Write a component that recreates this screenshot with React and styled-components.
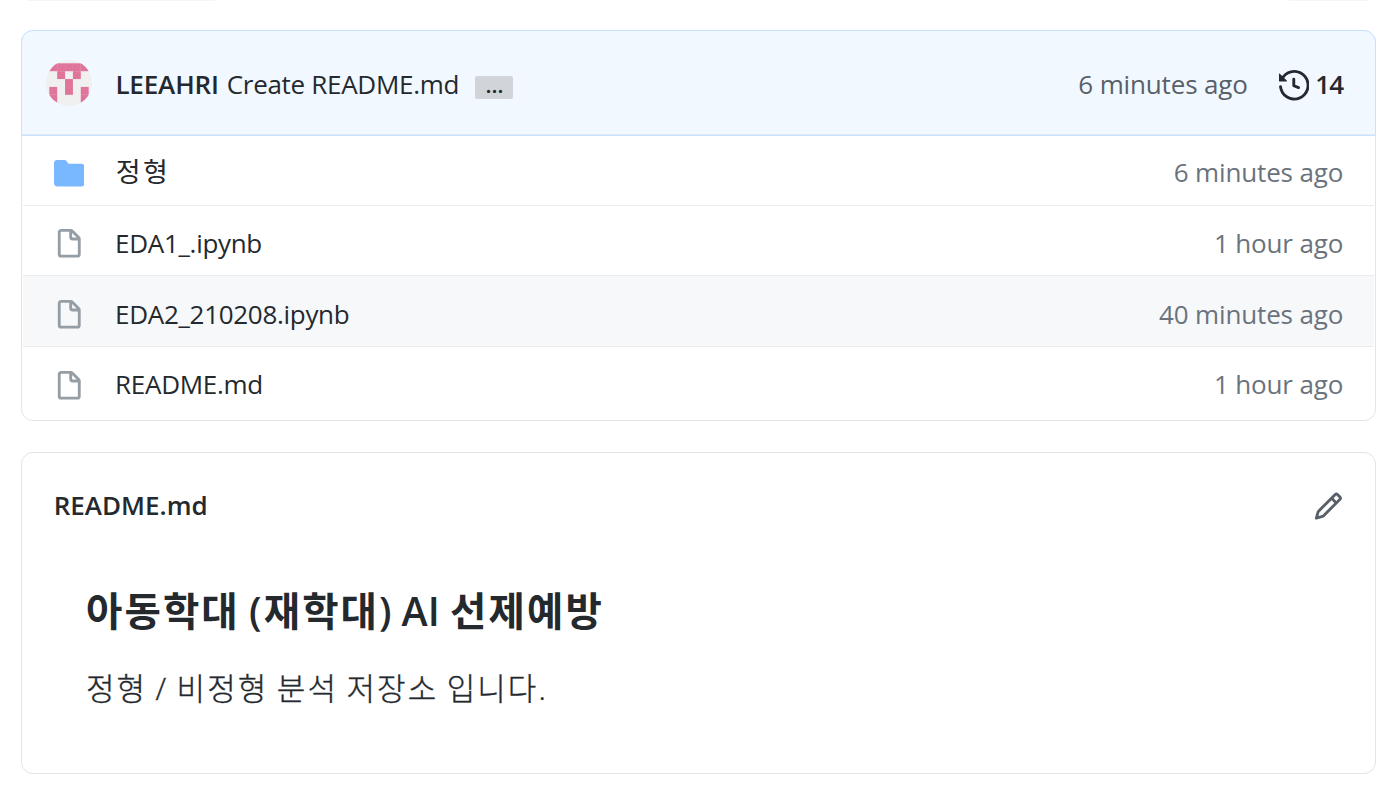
import React from 'react'
import styled, { createGlobalStyle } from 'styled-components'

const files = [
	{ name: '정형', time: '6 minutes ago', folder: true, height: 69, iconTop: '0px' },
	{ name: 'EDA1_.ipynb', time: '1 hour ago', height: 70, iconTop: '0px' },
	{ name: 'EDA2_210208.ipynb', time: '40 minutes ago', height: 71, active: true, textTop: '-3px', iconTop: '1px' },
	{ name: 'README.md', time: '1 hour ago', height: 74, iconTop: '0.6px' },
]

// filled cells of the 5x5 avatar, as [column, row]
const cells = [
	[0, 0], [1, 0], [2, 0], [3, 0], [4, 0],
	[1, 1], [3, 1],
	[2, 2],
	[0, 3], [2, 3], [4, 3],
	[0, 4], [4, 4],
]

const FileIcon = ({ top }) => (
	<Icon viewBox="0 0 16 16" $top={top}>
		<path fillRule="evenodd" d="M3.75 1.5a.25.25 0 00-.25.25v11.5c0 .138.112.25.25.25h8.5a.25.25 0 00.25-.25V6H9.75A1.75 1.75 0 018 4.25V1.5H3.75zm5.75.56v2.19c0 .138.112.25.25.25h2.19L9.5 2.06zM2 1.75C2 .784 2.784 0 3.75 0h5.086c.464 0 .909.184 1.237.513l3.414 3.414c.329.328.513.773.513 1.237v8.086A1.75 1.75 0 0112.25 15h-8.5A1.75 1.75 0 012 13.25V1.75z" />
	</Icon>
)

const FolderIcon = () => (
	<Icon viewBox="0 0 16 16">
		<path d="M1.75 1A1.75 1.75 0 000 2.75v10.5C0 14.216.784 15 1.75 15h12.5A1.75 1.75 0 0016 13.25v-8.5A1.75 1.75 0 0014.25 3h-6.5a.25.25 0 01-.2-.1l-.9-1.2c-.33-.44-.85-.7-1.4-.7h-3.5z" />
	</Icon>
)

const HistoryIcon = () => (
	<Icon viewBox="0 0 16 16" $top="1px">
		<path fillRule="evenodd" d="M1.643 3.143L.427 1.927A.25.25 0 000 2.104V5.75c0 .138.112.25.25.25h3.646a.25.25 0 00.177-.427L2.715 4.215a6.5 6.5 0 11-1.18 4.458.75.75 0 10-1.493.154 8.001 8.001 0 101.6-5.684zM7.75 4a.75.75 0 01.75.75v2.992l2.028.812a.75.75 0 01-.557 1.392l-2.5-1A.75.75 0 017 8.25v-3.5A.75.75 0 017.75 4z" />
	</Icon>
)

const PencilIcon = () => (
	<Icon viewBox="0 0 16 16" $top="2px">
		<path fillRule="evenodd" d="M11.013 1.427a1.75 1.75 0 012.474 0l1.086 1.086a1.75 1.75 0 010 2.474l-8.61 8.61c-.21.21-.47.364-.756.445l-3.251.93a.75.75 0 01-.927-.928l.929-3.25a1.75 1.75 0 01.445-.758l8.61-8.61zm1.414 1.06a.25.25 0 00-.354 0L10.811 3.75l1.439 1.44 1.263-1.263a.25.25 0 000-.354l-1.086-1.086zM11.189 6.25L9.75 4.81l-6.286 6.287a.25.25 0 00-.064.108l-.558 1.953 1.953-.558a.249.249 0 00.108-.064l6.286-6.286z" />
	</Icon>
)

const App = () => {
	return (
		<Page>
			<GlobalStyle />
			<Toolbar>
				<ToolbarEdge $width="187px" />
				<ToolbarEdge $width="79px" />
			</Toolbar>
			<FileBox>
				<CommitBar>
					<Avatar viewBox="0 0 46 46">
						{cells.map(([x, y]) => (
							<rect key={`${x}-${y}`} x={3.3 + x * 7.87} y={3.3 + y * 7.87} width="7.9" height="7.9" />
						))}
					</Avatar>
					<Author>LEEAHRI</Author>
					<Message>Create README.md</Message>
					<More>…</More>
					<CommitTime>6 minutes ago</CommitTime>
					<HistoryIcon />
					<Count>14</Count>
				</CommitBar>
				{files.map((file) => (
					<Row key={file.name} $height={file.height} $active={file.active} $folder={file.folder}>
						{file.folder ? <FolderIcon /> : <FileIcon top={file.iconTop} />}
						<FileName $folder={file.folder} $top={file.textTop}>{file.name}</FileName>
						<Time $top={file.textTop}>{file.time}</Time>
					</Row>
				))}
			</FileBox>
			<ReadmeBox>
				<ReadmeBar>
					<ReadmeName>README.md</ReadmeName>
					<PencilIcon />
				</ReadmeBar>
				<Article>
					<h2>아동학대 (재학대) <span>AI</span> 선제예방</h2>
					<p>정형 / 비정형 분석 저장소 입니다.</p>
				</Article>
			</ReadmeBox>
		</Page>
	)
}

const GlobalStyle = createGlobalStyle`
body{
	margin: 0;
	background-color: #fff;
}
*{
	box-sizing: border-box;
}
`

const Page = styled.div`
width: 1396px;
height: 808px;
padding: 0 20px 0 21px;
overflow: hidden;
color: #24292e;
font-family: "Open Sans", "Noto Sans CJK KR", sans-serif;
font-size: 26px;
line-height: 36px;
white-space: nowrap;
`

const Toolbar = styled.div`
display: flex;
justify-content: space-between;
padding: 0 8px 0 7px;
margin-bottom: 29px;
`

const ToolbarEdge = styled.div`
width: ${(props) => props.$width};
height: 1px;
background-color: #f5f6f7;
`

const Icon = styled.svg`
width: 30.5px;
height: 30.5px;
flex: none;
margin-top: ${(props) => props.$top || 0};
fill: currentColor;
`

const FileBox = styled.div`
height: 391px;
border: 1px solid #e1e4e8;
border-radius: 12px;
`

const CommitBar = styled.div`
display: flex;
align-items: center;
height: 106px;
margin: -1px -1px 0;
padding: 4px 32px 0 25px;
background-color: #f1f8ff;
border: 1px solid #c8e1ff;
border-radius: 12px 12px 0 0;
box-shadow: inset 0 -1px 0 #e4ebf3;
`

const Avatar = styled.svg`
width: 46px;
height: 46px;
margin: -5px 23.4px 0 -1px;
border-radius: 50%;
background-color: #f0f0f0;
fill: #e0759b;
`

const Author = styled.span`
margin: -2px 8px 0 0;
font-weight: 600;
letter-spacing: -0.15px;
`

const Message = styled.span`
margin-top: -2px;
letter-spacing: -0.3px;
`

const More = styled.span`
width: 38px;
height: 23px;
margin: 4px 0 0 16.3px;
border-radius: 2px;
background-color: #d1d5da;
font-size: 22px;
font-weight: 600;
line-height: 16px;
text-align: center;
`

const CommitTime = styled.span`
margin: -2px 31px 0 auto;
color: #586069;
letter-spacing: -0.15px;
`

const Count = styled.span`
margin: -2px 0 0 6px;
font-weight: 600;
letter-spacing: -1px;
`

const Row = styled.div`
display: flex;
align-items: flex-start;
height: ${(props) => props.$height}px;
margin: 0 1px;
padding: ${(props) => (props.$folder ? '22px' : '23px')} 30.8px 0;
background-color: ${(props) => (props.$active ? '#f6f8fa' : 'transparent')};
border-top: ${(props) => (props.$folder ? 'none' : '1px solid #eaecef')};
color: ${(props) => (props.$folder ? '#79b8ff' : '#959da5')};
`

const FileName = styled.span`
margin: ${(props) => props.$top || '-4px'} 0 0 ${(props) => (props.$folder ? '31.5px' : '30.8px')};
color: #24292e;
font-size: ${(props) => (props.$folder ? '27px' : '26px')};
letter-spacing: ${(props) => (props.$folder ? '2.4px' : '-0.3px')};
`

const Time = styled.span`
margin: ${(props) => props.$top || '-4px'} 0 0 auto;
color: #6a737d;
letter-spacing: -0.15px;
`

const ReadmeBox = styled.div`
height: 322px;
margin-top: 31px;
border: 1px solid #e1e4e8;
border-radius: 12px;
`

const ReadmeBar = styled.div`
display: flex;
align-items: center;
justify-content: space-between;
height: 105px;
padding: 0 32px 0 31.7px;
color: #586069;
`

const ReadmeName = styled.span`
margin-top: -2px;
color: #24292e;
font-weight: 600;
`

const Article = styled.div`
padding: 23px 64px 0;

h2{
	margin: 0;
	font-size: 39.5px;
	font-weight: 600;
	line-height: 60px;
	letter-spacing: 2.1px;
	word-spacing: -3px;
}
h2 span{
	margin: 0 1px 0 -1.5px;
	letter-spacing: 0;
}
p{
	margin: 24px 0 0;
	font-size: 31px;
	font-weight: 300;
	line-height: 46px;
	letter-spacing: 2.1px;
	word-spacing: -1.8px;
	-webkit-text-stroke: 0.35px #24292e;
}
`

export default App
